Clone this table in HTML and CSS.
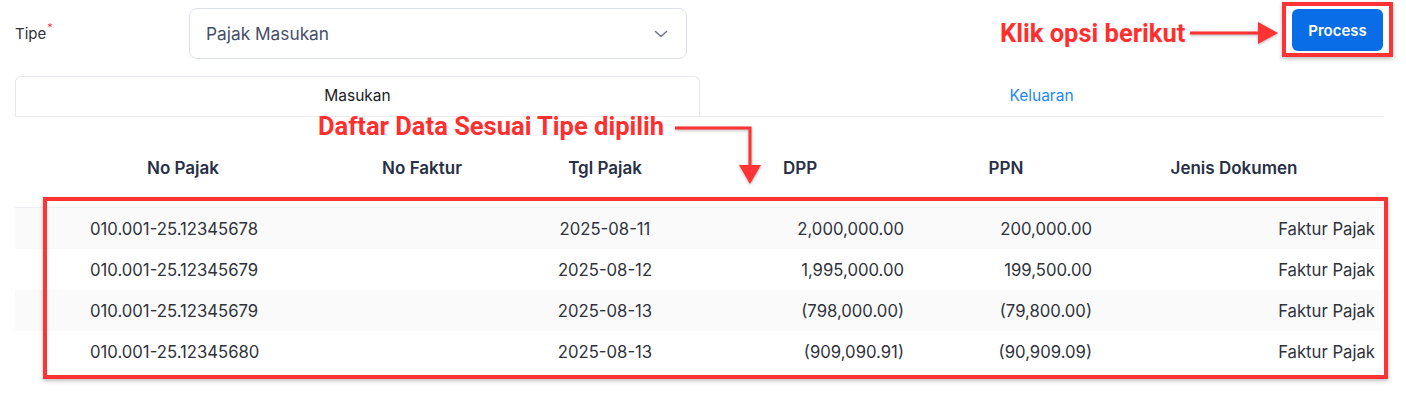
FILE: index.html
```html
<!DOCTYPE html>
<html>
<head>
<meta charset="utf-8">
<link rel="stylesheet" href="styles.css">
</head>
<body>
<div class="page">
  <div class="top-row">
    <label class="field-label">Tipe<span class="req">*</span></label>
    <div class="select">
      <span class="select-value">Pajak Masukan</span>
      <svg class="chevron" width="14" height="8" viewBox="0 0 14 8"><path d="M1.5 1.5 L7 6.5 L12.5 1.5" fill="none" stroke="#6b7590" stroke-width="1.5" stroke-linecap="round" stroke-linejoin="round"/></svg>
    </div>
    <div class="spacer"></div>
    <button class="btn-process">Process</button>
  </div>

  <div class="tabs">
    <div class="tab active">Masukan</div>
    <div class="tab">Keluaran</div>
  </div>

  <div class="table">
    <div class="row head">
      <div class="c c1">No Pajak</div>
      <div class="c c2">No Faktur</div>
      <div class="c c3">Tgl Pajak</div>
      <div class="c c4">DPP</div>
      <div class="c c5">PPN</div>
      <div class="c c6">Jenis Dokumen</div>
    </div>
    <div class="row body alt">
      <div class="c c1">010.001-25.12345678</div>
      <div class="c c2"></div>
      <div class="c c3">2025-08-11</div>
      <div class="c c4">2,000,000.00</div>
      <div class="c c5">200,000.00</div>
      <div class="c c6">Faktur Pajak</div>
    </div>
    <div class="row body">
      <div class="c c1">010.001-25.12345679</div>
      <div class="c c2"></div>
      <div class="c c3">2025-08-12</div>
      <div class="c c4">1,995,000.00</div>
      <div class="c c5">199,500.00</div>
      <div class="c c6">Faktur Pajak</div>
    </div>
    <div class="row body alt">
      <div class="c c1">010.001-25.12345679</div>
      <div class="c c2"></div>
      <div class="c c3">2025-08-13</div>
      <div class="c c4">(798,000.00)</div>
      <div class="c c5">(79,800.00)</div>
      <div class="c c6">Faktur Pajak</div>
    </div>
    <div class="row body">
      <div class="c c1">010.001-25.12345680</div>
      <div class="c c2"></div>
      <div class="c c3">2025-08-13</div>
      <div class="c c4">(909,090.91)</div>
      <div class="c c5">(90,909.09)</div>
      <div class="c c6">Faktur Pajak</div>
    </div>
  </div>

  <!-- annotations -->
  <div class="note note-process">Klik opsi berikut</div>
  <svg class="arrow arrow-process" width="100" height="30" viewBox="0 0 100 30"><line x1="2" y1="15" x2="72" y2="15" stroke="#ff3333" stroke-width="3"/><polygon points="70,4 90,15 70,26" fill="#ff3333"/></svg>
  <div class="hl hl-process"></div>

  <div class="note note-list">Daftar Data Sesuai Tipe dipilih</div>
  <svg class="arrow arrow-list" width="100" height="70" viewBox="0 0 100 70"><polyline points="3,9 78,9 78,50" fill="none" stroke="#ff3333" stroke-width="3"/><polygon points="67,46 89,46 78,65" fill="#ff3333"/></svg>
  <div class="hl hl-list"></div>
</div>
</body>
</html>
```

FILE: styles.css
```css
html, body {
  margin: 0;
  padding: 0;
  background: #ffffff;
}

.page {
  position: relative;
  width: 1406px;
  height: 394px;
  font-family: Inter, "Noto Sans", sans-serif;
  color: #333640;
  overflow: hidden;
}

.top-row {
  display: flex;
  align-items: flex-start;
  padding: 8px 23px 0 15px;
  height: 51px;
}

.field-label {
  width: 174px;
  height: 51px;
  display: flex;
  align-items: center;
  font-size: 15px;
  line-height: 20px;
  color: #2f323a;
}

.req {
  position: relative;
  top: -6px;
  color: #f0365a;
  font-size: 11px;
  line-height: 11px;
  margin-left: 1px;
}

.select {
  width: 498px;
  height: 51px;
  box-sizing: border-box;
  border: 1px solid #dde1ea;
  border-radius: 8px;
  display: flex;
  align-items: center;
  padding: 0 18px 0 16px;
}

.select-value {
  flex: 1;
  font-size: 17.3px;
  color: #454e6a;
}

.chevron {
  display: block;
}

.spacer {
  flex: 1;
}

.btn-process {
  margin-top: 1px;
  width: 91px;
  height: 42px;
  border: none;
  border-radius: 6px;
  background: #086de6;
  color: #ffffff;
  font-family: Inter, "Noto Sans", sans-serif;
  font-weight: 600;
  font-size: 15px;
  padding: 0;
}

.tabs {
  display: flex;
  margin: 17px 23px 0 15px;
  height: 41px;
  border-bottom: 1px solid #eceef2;
  box-sizing: border-box;
}

.tab {
  flex: 1;
  text-align: center;
  font-size: 15.5px;
  line-height: 40px;
  color: #1e86ff;
}

.tab.active {
  color: #1b1d22;
  border: 1px solid #e6e8ee;
  border-bottom: none;
  border-radius: 6px 6px 0 0;
  line-height: 38px;
}

.table {
  margin: 0 23px 0 15px;
}

.row {
  display: grid;
  grid-template-columns: 336px 142px 224px 203px 188px 275px;
}

.row.head {
  height: 91px;
  border-bottom: 1px solid #eeeff2;
  box-sizing: border-box;
}

.row.head .c {
  padding-top: 39px;
  font-size: 17px;
  line-height: 24px;
  font-weight: 600;
  color: #283046;
  text-align: center;
}

.row.head .c4 { padding-right: 37px; }
.row.head .c5 { padding-right: 16px; }
.row.head .c6 { padding-right: 23px; }

.row.body {
  height: 41px;
  align-items: center;
  font-size: 16.7px;
  color: #2f323a;
}

.row.body.alt {
  background: #fafafa;
}

.row.body .c1 { padding-left: 75px; }
.row.body .c3 { text-align: center; }
.row.body .c4 { text-align: right; padding-right: 16px; }
.row.body .c5 { text-align: right; padding-right: 16px; }
.row.body .c6 { text-align: right; padding-right: 8px; }

/* annotations */
.note {
  position: absolute;
  font-family: Roboto, "Liberation Sans", sans-serif;
  font-weight: 700;
  font-size: 25.5px;
  line-height: 30px;
  color: #ff2f2f;
  white-space: nowrap;
}

.note-process {
  left: 1000px;
  top: 18px;
}

.note-list {
  left: 318px;
  top: 111px;
}

.arrow {
  position: absolute;
  filter: drop-shadow(0 1px 1.5px rgba(0, 0, 0, 0.3));
}

.arrow-process {
  left: 1188px;
  top: 18px;
}

.arrow-list {
  left: 672px;
  top: 119px;
}

.hl {
  position: absolute;
  border: 4px solid #ff3333;
  box-sizing: border-box;
  box-shadow: 0 2px 4px rgba(0, 0, 0, 0.25);
}

.hl-process {
  left: 1282px;
  top: 2px;
  width: 111px;
  height: 55px;
}

.hl-list {
  left: 43px;
  top: 197px;
  width: 1345px;
  height: 182px;
}
```
